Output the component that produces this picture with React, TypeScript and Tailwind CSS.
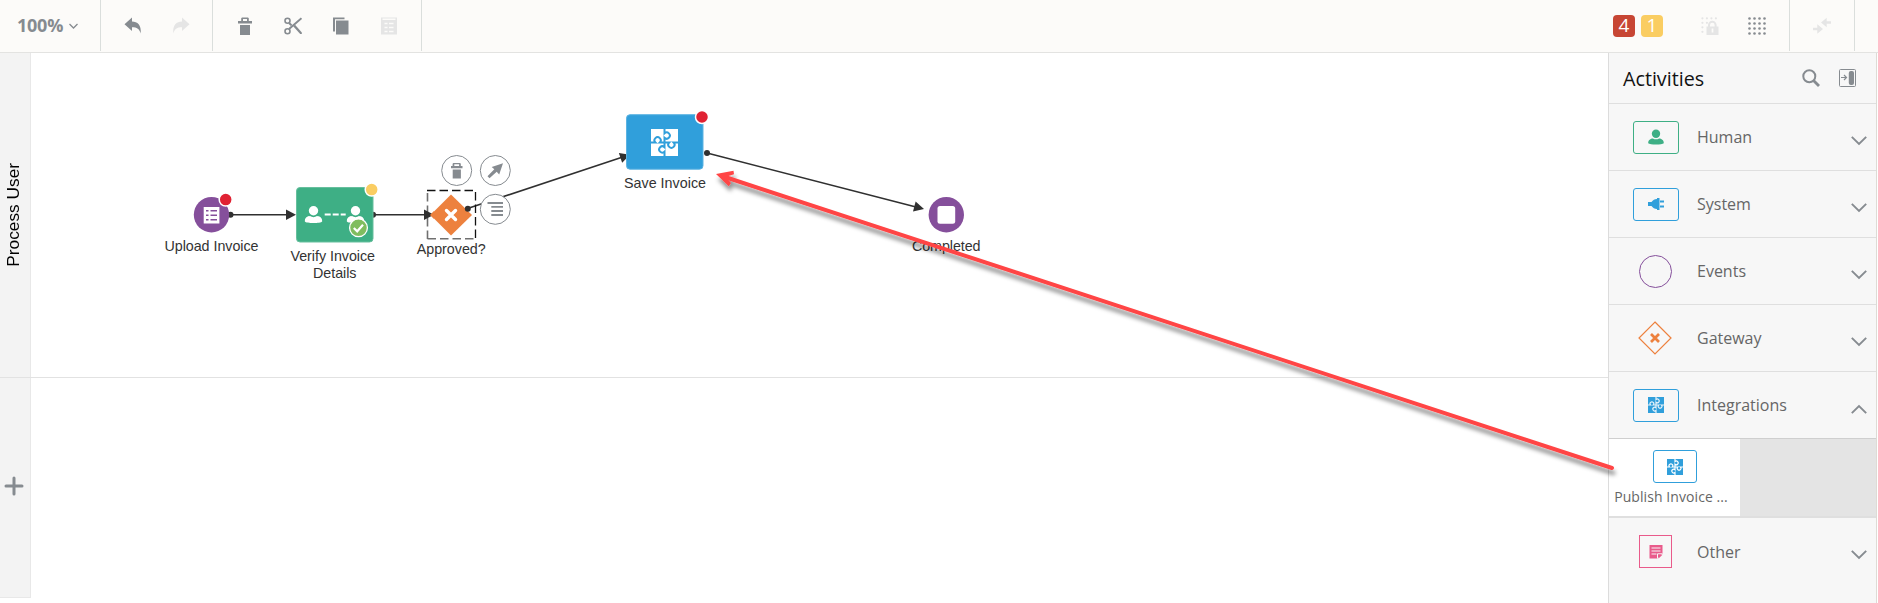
import React, { type ReactNode } from "react";

const SEAM = "M13.5 -1V4.4A3.1 3.1 0 1 1 13.5 8.8V13.5";

function Puzzle({ size, fill, seam }: { size: number; fill: string; seam: string }) {
  return (
    <svg width={size} height={size} viewBox="0 0 27 27" className="block shrink-0">
      <rect width="27" height="27" fill={fill} />
      {[0, 90, 180, 270].map((a) => (
        <path key={a} d={SEAM} transform={`rotate(${a} 13.5 13.5)`} fill="none" stroke={seam} strokeWidth="2" />
      ))}
    </svg>
  );
}

function Trash() {
  return (
    <svg width="18" height="18" viewBox="0 0 18 18" fill="currentColor" className="block">
      <path fillRule="evenodd" d="M6 0.5h6l0.8 0.8V4H16v2.500H2V4h3.200V1.300zM7 2v2h4V2z" />
      <path d="M4 8h10v10H4z" />
    </svg>
  );
}

function Undo({ flip = false }: { flip?: boolean }) {
  return (
    <svg width="18" height="18" viewBox="0 0 18 18" fill="currentColor" className={flip ? "block -scale-x-100" : "block"}>
      <path d="M0.500 7.300L8 0.500V4.500C13.500 4.500 17.500 8 16.700 16.500C15.500 12 13 10.200 8 10.200V14z" />
    </svg>
  );
}

function Scissors() {
  return (
    <svg width="18" height="18" viewBox="0 0 18 18" fill="none" stroke="currentColor" className="block">
      <circle cx="3.500" cy="3.800" r="2.500" strokeWidth="1.600" />
      <circle cx="3.500" cy="14.200" r="2.500" strokeWidth="1.600" />
      <path d="M5 6L7.500 8.300M5 12L17.500 1.200" strokeWidth="2" />
      <path d="M9.200 9.300L11 7.800L17.800 15.500V17H16.200z" fill="currentColor" stroke="none" />
    </svg>
  );
}

function Copy() {
  return (
    <svg width="18" height="18" viewBox="0 0 18 18" fill="currentColor" className="block">
      <path d="M1 0.500H12.500V2.200H3V14.500H1z" />
      <path d="M4 3.500H16.500V17.500H4z" />
    </svg>
  );
}

function Clipboard() {
  return (
    <svg width="18" height="18" viewBox="0 0 18 18" className="block">
      <path d="M1 0.500H17V17.500H1z" fill="currentColor" />
      <path d="M2.500 2.300H15.500M4.500 6.500H7.500M9 6.500H13.500M4.500 10.500H7.500M9 10.500H13.500M4.500 14.500H7.500M9 14.500H13.500" stroke="#fcfbf9" strokeWidth="1.500" />
    </svg>
  );
}

function GridDots() {
  return (
    <svg width="18" height="18" viewBox="0 0 18 18" fill="currentColor" className="block">
      {[0, 1, 2, 3].flatMap((r) =>
        [0, 1, 2, 3].map((c) => <circle key={`${r}-${c}`} cx={1.5 + c * 5} cy={1.5 + r * 5} r="1.3" />),
      )}
    </svg>
  );
}

function LockedGrid() {
  return (
    <svg width="18" height="18" viewBox="0 0 18 18" fill="currentColor" className="block">
      {[0, 1, 2, 3].map((c) => (
        <circle key={c} cx={1.4 + c * 4.5} cy="1.300" r="1.100" />
      ))}
      {[1, 2, 3].map((c) => (
        <circle key={c} cx="1.400" cy={1.3 + c * 4.5} r="1.100" />
      ))}
      <circle cx="5.900" cy="5.800" r="1.100" />
      <path d="M8 10V8a3.300 3.300 0 0 1 6.600 0v2" fill="none" stroke="currentColor" strokeWidth="2" />
      <path d="M5.500 9.500H17.500V18H5.500z" />
      <path d="M11.500 11.500v4" stroke="#fcfbf9" strokeWidth="1.700" />
    </svg>
  );
}

function Converge() {
  return (
    <svg width="18" height="18" viewBox="0 0 18 18" fill="currentColor" className="block">
      <path d="M18 4.300v2.400h-4.300v3.600L8 5.500L13.700 0.800v3.500z" />
      <path d="M0 10.800v2.400h4.300v3.600L10 12L4.300 7.300v3.500z" />
    </svg>
  );
}

function Person({ size = 18 }: { size?: number }) {
  return (
    <svg width={size} height={size} viewBox="0 0 18 18" fill="currentColor" className="block">
      <circle cx="9" cy="5.300" r="4.700" />
      <path d="M0.200 16C0.200 12 3 10.800 5.500 10.600C7.800 12 10.200 12 12.500 10.600C15 10.800 17.800 12 17.800 16C16 18 2 18 0.200 16z" />
    </svg>
  );
}

function Chevron({ up = false }: { up?: boolean }) {
  return (
    <svg width="16" height="10" viewBox="0 0 16 10" fill="none" stroke="#868b90" strokeWidth="1.900" className={up ? "block rotate-180" : "block"}>
      <path d="M0.800 0.800L8 8L15.200 0.800" />
    </svg>
  );
}

function Row({ icon, label, open = false, last = false }: { icon: ReactNode; label: string; open?: boolean; last?: boolean }) {
  return (
    <div className={`flex h-[67px] shrink-0 items-center pr-[9px] pl-6 ${last ? "" : open ? "border-b border-[#cfcfcf]" : "border-b border-[#dfdfdf]"}`}>
      <div className="flex w-[46px] justify-center">{icon}</div>
      <span className="ml-[18px] flex-1 text-[16px] leading-6 text-[#666]">{label}</span>
      <div className="pt-[7px]"><Chevron up={open} /></div>
    </div>
  );
}

const tile = "flex h-[33px] w-[46px] items-center justify-center rounded-[3px] border";

function Palette() {
  return (
    <aside className="flex w-[269px] shrink-0 flex-col border-x border-[#dcdcdc] border-r-[#dedbd5] bg-[#f7f7f7]">
      <div className="flex h-[51px] shrink-0 items-center border-b border-[#dfdfdf] pr-5 pl-[14px]">
        <h2 className="flex-1 pt-px text-[19.700px] leading-6 text-[#111]">Activities</h2>
        <svg width="18" height="18" viewBox="0 0 18 18" fill="none" stroke="#868b90" className="mr-[18px]">
          <circle cx="7.300" cy="7.300" r="6" strokeWidth="2" />
          <path d="M11.500 11.500L17 17" strokeWidth="2.800" />
        </svg>
        <svg width="18" height="18" viewBox="0 0 18 18" fill="none" stroke="#868b90">
          <rect x="1.500" y="0.500" width="16" height="17" rx="1" />
          <path d="M3 8.500H8.500M6 6L8.500 8.500L6 11" strokeWidth="1.200" />
          <rect x="10.800" y="2" width="5.200" height="14" rx="2" fill="#868b90" stroke="none" />
        </svg>
      </div>
      <Row label="Human" icon={<div className={`${tile} border-[#3eaf85] text-[#3eaf85]`}><Person size={16} /></div>} />
      <Row
        label="System"
        icon={
          <div className={`${tile} border-[#309fdb]`}>
            <svg width="16" height="12" viewBox="0 0 16 12" fill="#309fdb">
              <path d="M0 4H3.500C5 2 6.500 1.200 9 1V0H11.500V12H9V11C6.500 10.800 5 10 3.500 8H0z" />
              <path d="M12 2.500H16V4.500H12zM12 7.500H16V9.500H12z" />
            </svg>
          </div>
        }
      />
      <Row label="Events" icon={<div className="mr-px size-[33px] rounded-full border border-[#854f9b]" />} />
      <Row
        label="Gateway"
        icon={
          <svg width="34" height="34" viewBox="0 0 34 34" fill="none" stroke="#ed813e" className="mr-[3px]">
            <path d="M17 1L33 17L17 33L1 17z" strokeWidth="1.200" />
            <path d="M13 13L21 21M21 13L13 21" strokeWidth="2.700" />
          </svg>
        }
      />
      <Row label="Integrations" open icon={<div className={`${tile} border-[#309fdb]`}><Puzzle size={16} fill="#309fdb" seam="#e5f2fa" /></div>} />
      <div className="flex h-[79px] shrink-0 border-b-2 border-[#dfdfdf] bg-[#e4e4e4]">
        <div className="flex w-[131px] flex-col items-center bg-white pt-[11px]">
          <div className="flex h-[33px] w-11 items-center justify-center rounded-[3px] border border-[#309fdb] text-[#309fdb]">
            <Puzzle size={16} fill="#309fdb" seam="#ffffff" />
          </div>
          <span className="mt-1 mr-[7px] text-[14px] leading-5 tracking-[0.080px] whitespace-nowrap text-[#666]">Publish Invoice ...</span>
        </div>
      </div>
      <Row
        label="Other"
        last
        icon={
          <div className="mr-px flex size-[33px] items-center justify-center border border-[#e95b8b]">
            <svg width="14" height="14" viewBox="0 0 14 14">
              <path d="M0.500 0H13.500V8.500L8.500 13.500H0.500z" fill="#e95b8b" />
              <path d="M2.500 3H11.500M2.500 6H11.500M2.500 9H7.500M8.500 13.500V8.800H13.500" stroke="#f7f7f7" fill="none" />
              <path d="M9.500 13.500V9.800H13.500z" fill="#e95b8b" />
            </svg>
          </div>
        }
      />
    </aside>
  );
}

function Toolbar() {
  return (
    <header className="flex h-[52px] shrink-0 bg-[#fcfbf9] text-[#868b90]">
      <div className="flex h-[51px] w-[101px] items-center border-r border-[#dadedc] pl-[17px]">
        <span className="text-[18px] font-bold tracking-[-0.250px]">100%</span>
        <svg width="9" height="6" viewBox="0 0 9 6" fill="none" stroke="currentColor" strokeWidth="1.300" className="ml-[6px]">
          <path d="M0.500 1L4.500 5L8.500 1" />
        </svg>
      </div>
      <div className="flex h-[51px] w-[112px] items-center gap-[30px] border-r border-[#dadedc] pl-[23px]">
        <Undo />
        <span className="text-[#e5e5e5]"><Undo flip /></span>
      </div>
      <div className="flex h-[51px] w-[209px] items-center gap-[30px] border-r border-[#dadedc] pl-[23px]">
        <Trash />
        <Scissors />
        <Copy />
        <span className="text-[#e5e5e5]"><Clipboard /></span>
      </div>
      <div className="ml-auto flex h-[51px] w-[177px] items-center border-r border-[#dadedc]">
        <span className="flex size-[22px] items-center justify-center rounded-[4px] bg-[#c74634] text-[19px] leading-none text-white">4</span>
        <span className="ml-[6px] flex size-[22px] items-center justify-center rounded-[4px] bg-[#facd62] text-[19px] leading-none text-white">1</span>
        <span className="ml-[38px] text-[#e5e5e5]"><LockedGrid /></span>
        <span className="ml-[29px]"><GridDots /></span>
      </div>
      <div className="mr-[23px] flex h-[51px] w-[65px] items-center border-r border-[#dadedc] pl-[23px] text-[#e5e5e5]">
        <Converge />
      </div>
    </header>
  );
}

function Label({ x, y, w, children }: { x: number; y: number; w: number; children: ReactNode }) {
  return (
    <text x={x} y={y} textLength={w} fontSize="14.300" fill="#333" fontFamily='"Liberation Sans", Arial, sans-serif'>
      {children}
    </text>
  );
}

function Badge({ x, y, fill }: { x: number; y: number; fill: string }) {
  return <circle cx={x} cy={y} r="6.500" fill={fill} stroke="#fff" strokeWidth="1.500" />;
}

function Head({ x, y, angle }: { x: number; y: number; angle: number }) {
  return <path d="M0 0L-10 -5.200V5.200z" fill="#303030" transform={`translate(${x} ${y}) rotate(${angle})`} />;
}

function Diagram() {
  return (
    <svg width="1878" height="603" viewBox="0 0 1878 603" className="pointer-events-none absolute top-0 left-0">
      <defs>
        <filter id="soft" x="-5%" y="-5%" width="110%" height="115%">
          <feDropShadow dx="1.500" dy="5" stdDeviation="2.300" floodColor="#000" floodOpacity="0.450" />
        </filter>
      </defs>
      <g stroke="#303030" strokeWidth="1.600" fill="none">
        <path d="M231 214.700H290M373 214.700H428M467.500 208.500L622 157.300M707 153L916 207" />
      </g>
      <g fill="#303030">
        <circle cx="230.500" cy="214.700" r="3" />
        <circle cx="373" cy="214.700" r="3" />
        <circle cx="707" cy="153" r="3" />
      </g>
      <Head x={296} y={214.7} angle={0} />
      <Head x={630} y={154.7} angle={-18.3} />
      <Head x={924} y={209} angle={14.5} />

      <circle cx="211.500" cy="214.700" r="17.700" fill="#854f9b" />
      <rect x="203.700" y="207" width="15.700" height="16.500" fill="#fff" />
      <path d="M206 210.700H208.500M210.500 210.700H217M206 215.200H208.500M210.500 215.200H217M206 219.700H208.500M210.500 219.700H217" stroke="#854f9b" strokeWidth="1.500" />
      <Badge x={225.7} y={199.6} fill="#e02233" />
      <Label x={164.5} y={251} w={94}>Upload Invoice</Label>

      <rect x="296.500" y="187.500" width="76.500" height="54.500" rx="3.500" fill="#3eaf85" stroke="#67bf9d" />
      <g color="#fff">
        <svg x="304.500" y="205.500" width="18" height="18"><Person /></svg>
        <svg x="346.500" y="205.500" width="18" height="18"><Person /></svg>
      </g>
      <path d="M324.700 214.500h6m2 0h6m2 0h5" stroke="#fff" strokeWidth="2" />
      <circle cx="358.500" cy="227.800" r="8.900" fill="#80bd5f" stroke="#fff" strokeWidth="1.300" />
      <path d="M353.800 228L357.200 231.300L363 224.800" fill="none" stroke="#fff" strokeWidth="2.200" />
      <Badge x={371.7} y={189.6} fill="#facd62" />
      <Label x={290.5} y={261} w={84.5}>Verify Invoice</Label>
      <Label x={313} y={277.7} w={43.5}>Details</Label>

      <path d="M427.500 239V190.500" stroke="#707070" strokeWidth="1.600" strokeDasharray="8.500 4" fill="none" />
      <path d="M427.500 238.700H475.500" stroke="#707070" strokeWidth="1.600" strokeDasharray="8.500 4" fill="none" />
      <path d="M427 190.500H475.500V239" stroke="#111" strokeWidth="1.300" strokeDasharray="8.500 4" fill="none" />
      <path d="M451 194.500L472 215L451 235.500L430.500 215z" fill="#ed813e" />
      <Head x={434} y={214.7} angle={0} />
      <path d="M434 211L430 215L434 219z" fill="#ed813e" />
      <path d="M446.500 210.500L455.500 219.500M455.500 210.500L446.500 219.500" stroke="#fff" strokeWidth="3.400" strokeLinecap="round" />
      <circle cx="467.800" cy="208.700" r="3" fill="#303030" />
      <Label x={416.7} y={254} w={69}>Approved?</Label>
      <g fill="#fff" stroke="#868b90">
        <circle cx="456.700" cy="170.500" r="15" />
        <circle cx="495.300" cy="170.500" r="15" />
        <circle cx="495.300" cy="209.300" r="15" />
      </g>
      <g fill="#868b90" stroke="none">
        <path fillRule="evenodd" d="M453.300 163h6.800l0.700 0.700V166H462.500v2.200H451V166h1.600v-2.300zM454.300 164.300v1.700h4.800v-1.700z" />
        <path d="M452.700 169.500h8.200v9h-8.200z" />
        <path d="M503 163.200L499.200 174.500L496.700 171.700L489.500 178.300L487.500 176.200L494.300 169.300L491.700 167z" />
      </g>
      <path d="M487.500 203H503M491.300 206.800H503M491.300 211H503M491.300 215H503" stroke="#868b90" strokeWidth="1.800" />

      <rect x="626.500" y="114.700" width="76.500" height="54.500" rx="3.500" fill="#309fdb" stroke="#5cb3e2" />
      <svg x="651" y="129" width="27" height="27"><Puzzle size={27} fill="#fff" seam="#309fdb" /></svg>
      <Badge x={702} y={117} fill="#e02233" />
      <Label x={624} y={188} w={82}>Save Invoice</Label>

      <circle cx="946.300" cy="214.700" r="17.700" fill="#854f9b" />
      <rect x="937.500" y="206" width="17.700" height="17.700" rx="2.500" fill="#fff" />
      <Label x={912} y={251} w={68.5}>Completed</Label>

      <g filter="url(#soft)" fill="#ff4545" stroke="none">
        <path d="M1612 468L725 177" stroke="#ff4545" strokeWidth="4" strokeLinecap="round" />
        <path d="M716 174L733.500 170.700L734 174.300L728.500 176L727.500 179L731 183L728.800 186.300z" />
      </g>
    </svg>
  );
}

export default function App() {
  return (
    <div className="relative flex h-[603px] w-[1878px] flex-col overflow-hidden bg-white font-['Open_Sans','Noto_Sans',sans-serif]">
      <Toolbar />
      <div className="flex min-h-0 flex-1 border-t border-[#e3e3e1]">
        <main className="flex flex-1 flex-col">
          <section className="flex h-[325px] border-b border-[#e2e2e2]">
            <div className="flex w-[31px] items-center justify-center border-r border-[#e8e8e8] bg-[#f3f3f3]">
              <span className="rotate-180 pl-[5px] font-['Liberation_Sans',sans-serif] text-[17.300px] leading-5 whitespace-nowrap text-black [writing-mode:vertical-rl]">
                Process User
              </span>
            </div>
          </section>
          <section className="flex h-[220px]">
            <div className="flex w-[31px] items-center justify-center border-r border-b border-[#e8e8e8] bg-[#f3f3f3] pr-[2px] pb-[4px]">
              <svg width="20" height="20" viewBox="0 0 20 20" stroke="#868b90" strokeWidth="3" strokeLinecap="round">
                <path d="M10 2V18M2 10H18" />
              </svg>
            </div>
          </section>
        </main>
        <Palette />
        <div className="w-px" />
      </div>
      <Diagram />
    </div>
  );
}
